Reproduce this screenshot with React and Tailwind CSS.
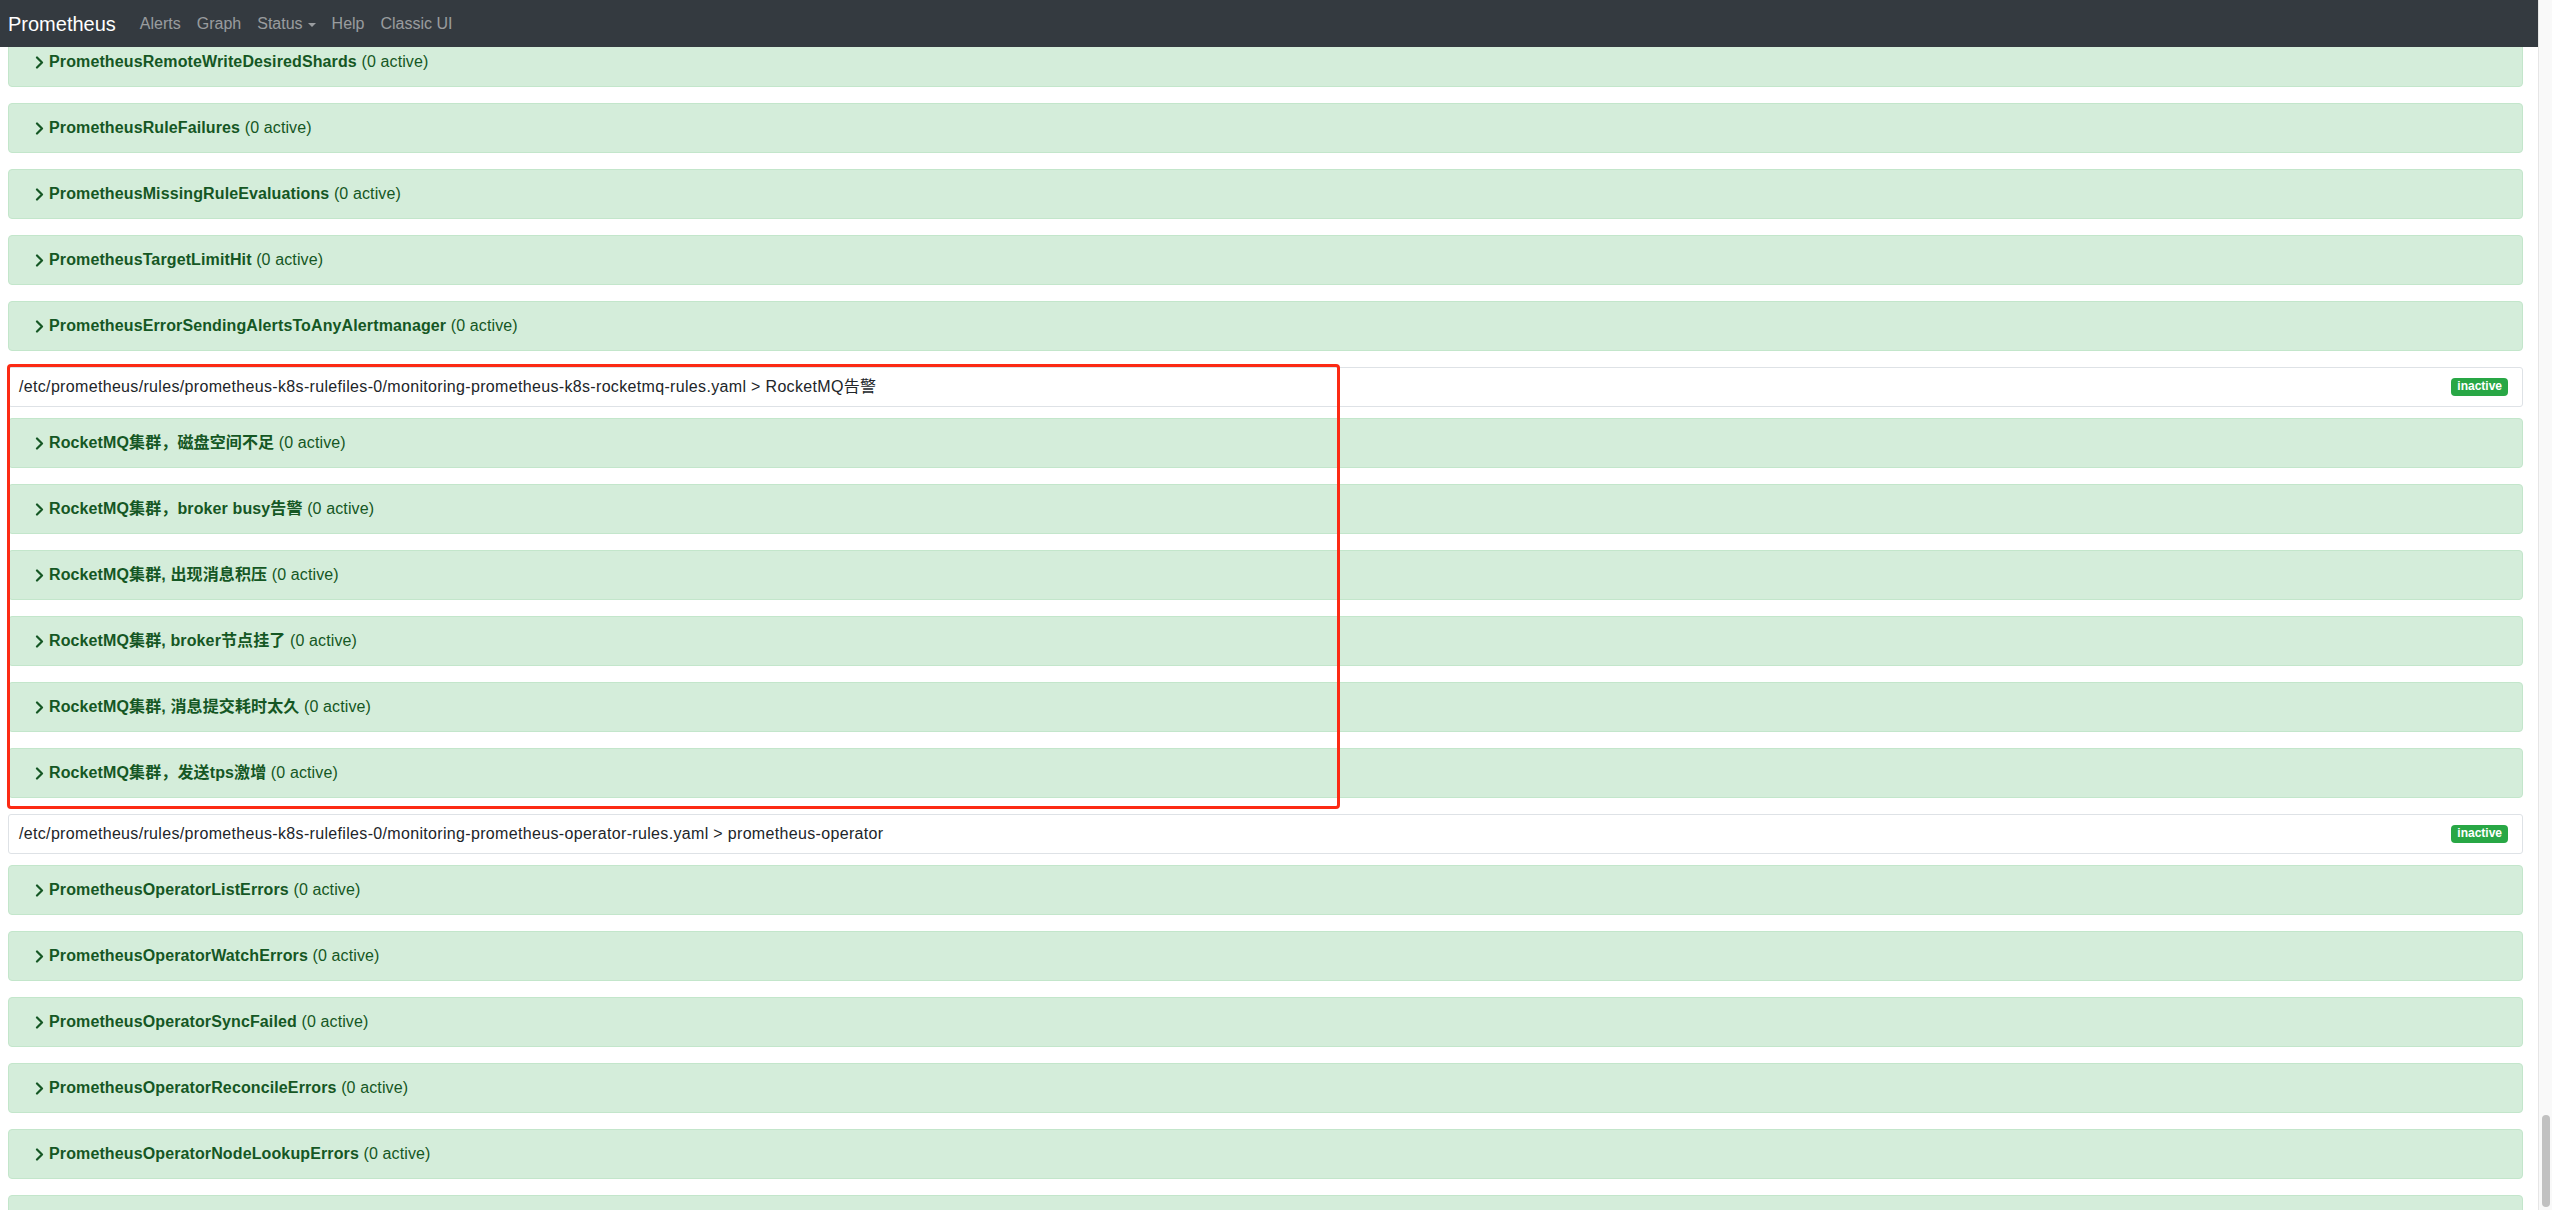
import React from "react";

const topRules = [
  "PrometheusRemoteWriteDesiredShards",
  "PrometheusRuleFailures",
  "PrometheusMissingRuleEvaluations",
  "PrometheusTargetLimitHit",
  "PrometheusErrorSendingAlertsToAnyAlertmanager",
];

const groups = [
  {
    title:
      "/etc/prometheus/rules/prometheus-k8s-rulefiles-0/monitoring-prometheus-k8s-rocketmq-rules.yaml > RocketMQ告警",
    rules: [
      "RocketMQ集群，磁盘空间不足",
      "RocketMQ集群，broker busy告警",
      "RocketMQ集群, 出现消息积压",
      "RocketMQ集群, broker节点挂了",
      "RocketMQ集群, 消息提交耗时太久",
      "RocketMQ集群，发送tps激增",
    ],
  },
  {
    title:
      "/etc/prometheus/rules/prometheus-k8s-rulefiles-0/monitoring-prometheus-operator-rules.yaml > prometheus-operator",
    rules: [
      "PrometheusOperatorListErrors",
      "PrometheusOperatorWatchErrors",
      "PrometheusOperatorSyncFailed",
      "PrometheusOperatorReconcileErrors",
      "PrometheusOperatorNodeLookupErrors",
      null, // next card, only its top edge is in view
    ],
  },
];

function Chevron() {
  return (
    <span className="inline-flex w-5 justify-center">
      <svg width="9" height="13" viewBox="0 0 9 13" fill="none">
        <path d="M2 1.5 L7 6.5 L2 11.5" stroke="currentColor" strokeWidth="2.2" strokeLinecap="round" strokeLinejoin="round" />
      </svg>
    </span>
  );
}

function RuleCard({ name }) {
  return (
    <div className="mb-4 flex h-[50px] items-center rounded border border-[#c3e6cb] bg-[#d4edda] px-5 text-[#155724]">
      {name && (
        <>
          <Chevron />
          <span className="leading-6 tracking-[0.12px]">
            <strong className="font-bold">{name}</strong> (0 active)
          </span>
        </>
      )}
    </div>
  );
}

function GroupHeader({ title }) {
  return (
    <div className="mb-[11px] flex h-[40px] items-center justify-between rounded-[3px] border border-[#dee2e6] pl-[10px] pr-[14px] text-[#212529]">
      <span className="leading-6 tracking-[0.33px]">{title}</span>
      <span className="rounded bg-[#28a745] px-[6px] pb-[2px] pt-[1px] text-[12px] font-bold leading-[15px] text-white">
        inactive
      </span>
    </div>
  );
}

export default function App() {
  return (
    <div className="flex h-[1210px] w-full overflow-hidden bg-white font-['Liberation_Sans','Noto_Sans_CJK_SC',sans-serif] text-[16px]">
      <div className="relative flex-1 overflow-hidden">
        <nav className="absolute left-0 right-0 top-0 z-10 flex h-[47px] items-center bg-[#343a40] px-2">
          <span className="mr-4 text-[20px] leading-[30px] text-white">Prometheus</span>
          <div className="flex items-center text-white/50">
            <span className="px-2">Alerts</span>
            <span className="px-2">Graph</span>
            <span className="flex items-center px-2">
              Status
              <span className="ml-[5px] mt-[2px] inline-block border-x-4 border-t-4 border-x-transparent border-t-current" />
            </span>
            <span className="px-2">Help</span>
            <span className="px-2">Classic UI</span>
          </div>
        </nav>

        <div className="pl-2 pr-[15px] pt-[37px]">
          {topRules.map((r) => (
            <RuleCard key={r} name={r} />
          ))}
          {groups.map((g) => (
            <div key={g.title}>
              <GroupHeader title={g.title} />
              {g.rules.map((r, i) => (
                <RuleCard key={i} name={r} />
              ))}
            </div>
          ))}
        </div>

        {/* annotation box */}
        <div className="pointer-events-none absolute left-[7px] top-[364px] h-[445px] w-[1333px] rounded-[4px] border-[3px] border-[#fc2a14]" />
      </div>

      <div className="flex h-full w-[14px] flex-col justify-end border-l border-[#e6e6e6] bg-[#f9f9f9] pb-[3px]">
        <div className="ml-[3px] h-[92px] w-[8px] rounded-full bg-[#c1c1c1]" />
      </div>
    </div>
  );
}
